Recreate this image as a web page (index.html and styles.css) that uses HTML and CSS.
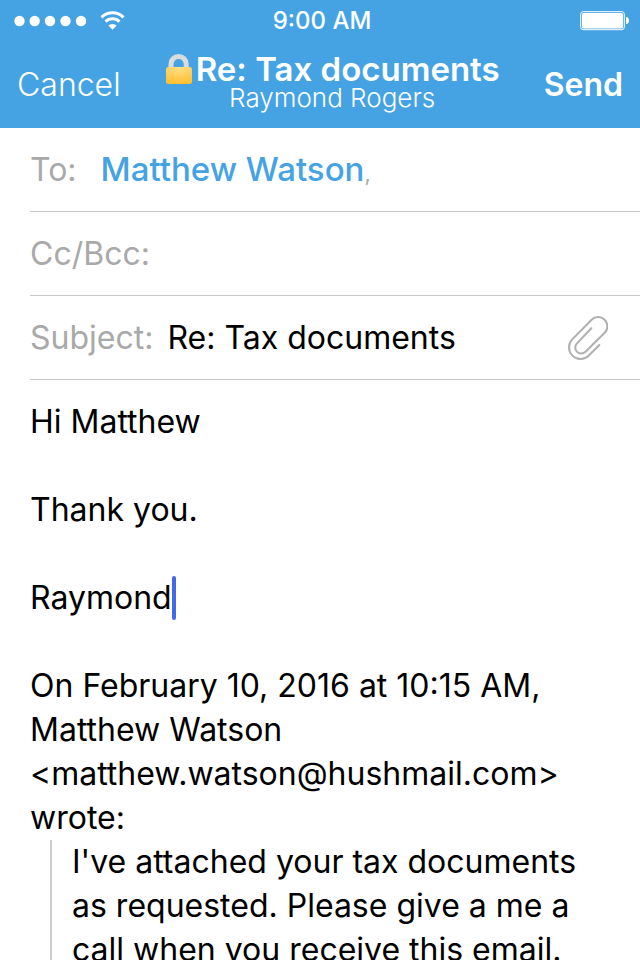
FILE: index.html
```html
<!DOCTYPE html>
<html lang="en">
<head>
<meta charset="utf-8">
<meta name="viewport" content="width=device-width, initial-scale=1">
<title>Re: Tax documents</title>
<link rel="stylesheet" href="styles.css">
</head>
<body>
<div class="app">
  <header class="top">
    <div class="status">
      <div class="status-left">
        <svg class="signal" viewBox="0 0 72 12" aria-hidden="true"><circle cx="5.5" cy="6" r="5.2"/><circle cx="20.7" cy="6" r="5.2"/><circle cx="36" cy="6" r="5.2"/><circle cx="51.5" cy="6" r="5.2"/><circle cx="67" cy="6" r="5.2"/></svg>
        <svg class="wifi" viewBox="0 0 26 20" aria-hidden="true"><path class="arc" d="M1.500 6.300a15.800 15.800 0 0 1 22 0M5.500 10.600a10.200 10.200 0 0 1 14 0"/><path d="M8.300 14.600a6 6 0 0 1 8.400 0L12.500 18.800z"/></svg>
      </div>
      <time class="clock">9:00 AM</time>
      <svg class="battery" viewBox="0 0 50 20" aria-hidden="true"><rect class="case" x=".7" y=".7" width="43.600" height="18" rx="2.500"/><rect x="2" y="2" width="41" height="15.400" rx="1.500"/><path d="M46 6c2 0 3 1.500 3 3.500S48 13 46 13z"/></svg>
    </div>
    <nav class="bar">
      <button class="action cancel" type="button">Cancel</button>
      <div class="heading">
        <h1 class="title">
          <svg class="lock" viewBox="0 0 28 32" aria-hidden="true">
            <defs><radialGradient id="brass" cx=".5" cy="0" r="1"><stop offset="0" stop-color="#ffe08c"/><stop offset="1" stop-color="#fec02f"/></radialGradient></defs>
            <path class="shackle" d="M6 16V11a7.600 7.600 0 0 1 15.200 0v5"/>
            <rect x="1" y="14" width="26" height="17" rx="2.500" fill="url(#brass)"/>
          </svg>Re: Tax documents</h1>
        <p class="sender">Raymond Rogers</p>
      </div>
      <button class="action send" type="button">Send</button>
    </nav>
  </header>

  <form class="compose">
    <div class="row">
      <label class="label" for="to">To:</label>
      <div class="recipients"><a class="recipient" href="#to">Matthew Watson</a><span class="comma">,</span><input class="field" id="to" type="text"></div>
    </div>
    <div class="row">
      <label class="label" for="cc">Cc/Bcc:</label>
      <input class="field" id="cc" type="text">
    </div>
    <div class="row">
      <label class="label" for="subject">Subject:</label>
      <input class="field subject" id="subject" type="text" value="Re: Tax documents">
      <button class="attach" type="button" aria-label="Attach file">
        <svg viewBox="0 0 40 44" aria-hidden="true"><path d="M23.300 12.300L9 27.400a5.900 5.900 0 0 0 8.500 8.400L36.700 16.800A9.200 9.200 0 0 0 23.600 3.800L4.200 23.400A11.600 11.600 0 0 0 20.600 39.800L31.300 29"/></svg>
      </button>
    </div>
    <div class="message" role="textbox" aria-multiline="true" aria-label="Message" contenteditable="true" spellcheck="false">
      <p>Hi Matthew</p>
      <p>Thank you.</p>
      <p>Raymond<span class="caret"></span></p>
      <div>On February 10, 2016 at 10:15 AM, Matthew Watson &lt;matthew.watson@hushmail.com&gt; wrote:</div>
      <blockquote>I've attached your tax documents as requested. Please give a me a call when you receive this email.</blockquote>
    </div>
  </form>
</div>
</body>
</html>
```
FILE: styles.css
```css
* {
  box-sizing: border-box;
}

body,
h1,
p,
blockquote {
  margin: 0;
}

body {
  background: #fff;
  color: #000;
  font-family: Inter, "Liberation Sans", sans-serif;
  font-size: 32px;
  line-height: 44px;
}

button,
input {
  margin: 0;
  padding: 0;
  border: 0;
  background: none;
  color: inherit;
  font: inherit;
}

.app {
  display: flex;
  flex-direction: column;
  height: 100vh;
  overflow: hidden;
}

.top {
  flex: none;
  background: #45a3e4;
  color: #fff;
}

.status {
  display: grid;
  grid-template-columns: 1fr auto 1fr;
  align-items: center;
  height: 42px;
  padding: 0 10px 0 14px;
}

.status svg {
  display: block;
  fill: #fff;
}

.status-left {
  display: flex;
  align-items: center;
  gap: 14px;
}

.signal {
  width: 72px;
  height: 12px;
}

.wifi {
  width: 26px;
  height: 20px;
}

.wifi .arc {
  fill: none;
  stroke: #fff;
  stroke-width: 3;
}

.clock {
  font-size: 24px;
  font-weight: 500;
  line-height: 28px;
}

.battery {
  width: 50px;
  height: 20px;
  justify-self: end;
}

.battery .case {
  fill: none;
  stroke: #fff;
}

.bar {
  display: flex;
  align-items: center;
  justify-content: space-between;
  height: 86px;
  padding: 0 17px;
}

.cancel {
  font-weight: 300;
}

.send {
  font-weight: 600;
}

.heading {
  padding-bottom: 6px;
  text-align: center;
}

.title {
  display: flex;
  align-items: center;
  gap: 3px;
  font-size: 33px;
  font-weight: 600;
  line-height: 32px;
}

.lock {
  width: 28px;
  height: 32px;
}

.lock .shackle {
  fill: none;
  stroke: #d9dbdd;
  stroke-width: 5;
}

.sender {
  font-size: 26px;
  font-weight: 300;
  line-height: 26px;
}

.compose {
  flex: 1;
  min-height: 0;
}

.row {
  display: flex;
  align-items: center;
  gap: 14px;
  height: 84px;
  margin-left: 30px;
  padding-right: 32px;
  border-bottom: 1px solid #c8c8c8;
}

.label {
  color: #a9a9a9;
}

.recipients {
  display: flex;
  flex: 1;
  align-items: baseline;
  min-width: 0;
  padding-left: 10px;
}

.recipient {
  color: #45a3e4;
  font-size: 33px;
  font-weight: 500;
  text-decoration: none;
}

.comma {
  color: #a9a9a9;
  font-size: 22px;
  line-height: 22px;
}

.field {
  flex: 1;
  min-width: 0;
  height: 44px;
  outline: 0;
}

.attach svg {
  display: block;
  width: 40px;
  height: 44px;
  fill: none;
  stroke: #b0b0b0;
  stroke-width: 2;
  stroke-linecap: round;
}

.message {
  padding: 20px 30px;
  outline: 0;
}

.message p {
  margin-bottom: 44px;
}

.caret {
  display: inline-block;
  width: 4px;
  height: 44px;
  margin-right: -4px;
  border-radius: 2px;
  background: #4169e8;
  vertical-align: top;
}

.message blockquote {
  margin-left: 20px;
  padding-left: 20px;
  border-left: 2px solid #ccc;
}
```
